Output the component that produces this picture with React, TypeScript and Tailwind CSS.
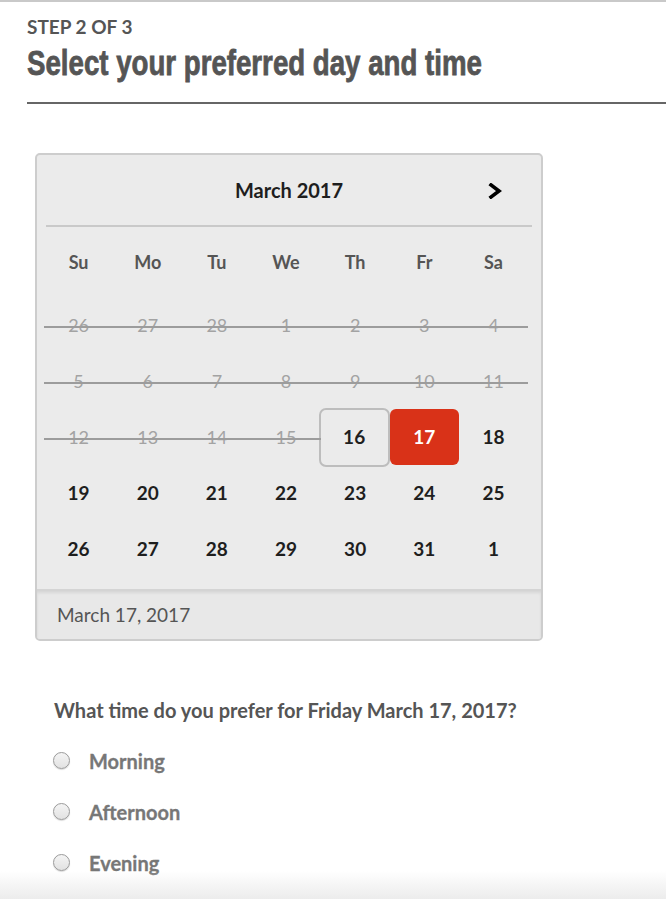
import React from "react";

const sans = { fontFamily: "Lato, 'Noto Sans', sans-serif" };
const narrow = { fontFamily: "'Liberation Sans', Arial, sans-serif" };

const weekdays = ["Su", "Mo", "Tu", "We", "Th", "Fr", "Sa"];

type Day = { n: number; past?: boolean; today?: boolean; selected?: boolean };

const rows: Day[][] = [
  [26, 27, 28, 1, 2, 3, 4].map((n) => ({ n, past: true })),
  [5, 6, 7, 8, 9, 10, 11].map((n) => ({ n, past: true })),
  [
    { n: 12, past: true },
    { n: 13, past: true },
    { n: 14, past: true },
    { n: 15, past: true },
    { n: 16, today: true },
    { n: 17, selected: true },
    { n: 18 },
  ],
  [19, 20, 21, 22, 23, 24, 25].map((n) => ({ n })),
  [26, 27, 28, 29, 30, 31, 1].map((n) => ({ n })),
];

const DayCell = ({ day }: { day: Day }) => {
  if (day.past) {
    return (
      <div className="relative flex h-[56px] items-center justify-center text-[18px] text-[#a3a3a3]">
        <span>{day.n}</span>
        <div className="absolute left-0 right-0 top-[29px] h-[2px] bg-[#9c9c9c]" />
      </div>
    );
  }
  if (day.today) {
    return (
      <div className="flex h-[56px] items-center justify-center">
        <div className="-ml-[2px] flex h-[59px] w-[72px] items-center justify-center rounded-[7px] border-2 border-[#bdbdbd] text-[19px] font-bold text-[#1e1e1e]">
          {day.n}
        </div>
      </div>
    );
  }
  if (day.selected) {
    return (
      <div className="flex h-[56px] items-center justify-center rounded-[6px] bg-[#d93218] text-[19px] font-bold text-white">
        {day.n}
      </div>
    );
  }
  return (
    <div className="flex h-[56px] items-center justify-center text-[19px] font-bold text-[#1e1e1e]">
      {day.n}
    </div>
  );
};

const Radio = ({ label }: { label: string }) => (
  <label className="flex h-[51px] items-center">
    <span className="ml-[53px] h-[17px] w-[17px] rounded-full border border-[#9a9a9a] bg-gradient-to-b from-[#f4f4f4] to-[#e2e2e2] shadow-[0_1px_1px_rgba(0,0,0,0.15)]" />
    <span className="ml-[19px] text-[20px] font-bold text-[#777] [-webkit-text-stroke:0.3px_#777]">{label}</span>
  </label>
);

export default function App() {
  return (
    <div className="relative min-h-[899px] overflow-hidden border-t-2 border-[#c9c9c9] bg-white" style={sans}>
      <div className="pl-[27px] pt-[13px]">
        <div className="text-[19px] font-bold leading-[24px] text-[#555]">STEP 2 OF 3</div>
        <h1 className="mt-[3px] whitespace-nowrap text-[35px] font-bold leading-[42px] text-[#555] [-webkit-text-stroke:0.8px_#555]" style={narrow}>
          <span className="inline-block origin-left scale-x-[0.79]">Select your preferred day and time</span>
        </h1>
        <div className="mt-[18px] h-[2px] bg-[#666]" />
      </div>

      <div className="ml-[35px] mt-[49px] w-[508px] overflow-hidden rounded-[5px] border-2 border-[#cdcdcd] bg-[#ebebeb]">
        <div className="relative mx-[9px] flex h-[72px] items-center justify-center border-b-2 border-[#c9c9c9] text-[20px] font-bold text-[#1e1e1e]">
          <span>March 2017</span>
          <svg className="absolute right-[30px] top-[28px]" width="14" height="16" viewBox="0 0 14 16">
            <polyline points="3,2 11,8 3,14" fill="none" stroke="#000" strokeWidth="3.6" strokeLinecap="square" strokeLinejoin="miter" />
          </svg>
        </div>
        <div className="pl-[7px] pr-[13px]">
          <div className="grid h-[70px] grid-cols-7 items-center text-[18px] font-bold text-[#555]">
            {weekdays.map((w) => (
              <div key={w} className="text-center">{w}</div>
            ))}
          </div>
          {rows.map((r, i) => (
            <div key={i} className="grid grid-cols-7">
              {r.map((d, j) => (
                <DayCell key={j} day={d} />
              ))}
            </div>
          ))}
          <div className="h-[12px]" />
        </div>
        <div className="flex h-[50px] items-center border-t-2 border-[#d4d4d4] bg-[#e8e8e8] pl-[20px] text-[19px] text-[#555] shadow-[inset_0_2px_3px_rgba(0,0,0,0.08)]">
          March 17, 2017
        </div>
      </div>

      <div className="ml-[54px] mt-[54px] text-[20px] font-bold text-[#555]">
        What time do you prefer for Friday March 17, 2017?
      </div>
      <div className="mt-[10px]">
        <Radio label="Morning" />
        <Radio label="Afternoon" />
        <Radio label="Evening" />
      </div>

      <div className="pointer-events-none absolute bottom-0 left-0 right-0 h-[28px] bg-gradient-to-b from-transparent to-[#ececec]" />
    </div>
  );
}
